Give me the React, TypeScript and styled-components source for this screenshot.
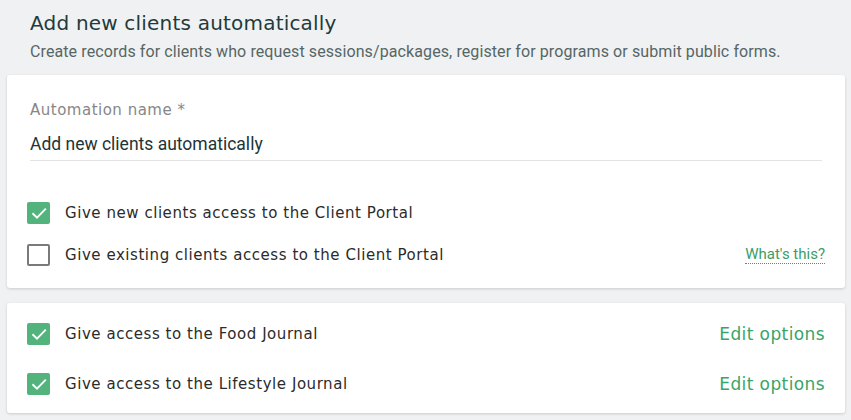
import React from 'react';
import styled, { createGlobalStyle } from 'styled-components';

const GlobalStyle = createGlobalStyle`
  body {
    margin: 0;
    background: #f0f1f3;
    font-family: Roboto, "Liberation Sans", sans-serif;
  }
`;

const Page = styled.div`
  padding: 8px 7px 0 7px;
  width: 838px;
`;

const Header = styled.div`
  padding: 0 0 13px 23px;
`;

const Title = styled.h1`
  margin: 0;
  font-family: "DejaVu Sans", sans-serif;
  font-weight: 400;
  font-size: 20px;
  letter-spacing: 0.2px;
  line-height: 30px;
  color: #1f3b3a;
`;

const Subtitle = styled.p`
  margin: 4px 0 0;
  font-size: 16px;
  letter-spacing: 0.1px;
  line-height: 20px;
  color: #566665;
`;

const Card = styled.section<{ $pad: string }>`
  background: #fff;
  border-radius: 3px;
  box-shadow: 0 1px 3px rgba(0, 0, 0, 0.16);
  padding: ${(p) => p.$pad};
  margin-bottom: 15px;
`;

const Field = styled.div`
  margin: 0 0 31px 3px;
  width: 792px;
  border-bottom: 1px solid #e1e3e3;
`;

const FieldLabel = styled.div`
  font-family: "DejaVu Sans", sans-serif;
  font-size: 15px;
  letter-spacing: 0.5px;
  line-height: 20px;
  color: #878787;
`;

const FieldValue = styled.div`
  margin-top: 14px;
  padding-bottom: 6px;
  font-size: 17.5px;
  line-height: 20px;
  color: #1d3535;
`;

const Row = styled.div<{ $h: number }>`
  display: flex;
  align-items: center;
  height: ${(p) => p.$h}px;
`;

const Box = styled.span<{ $on: boolean }>`
  box-sizing: border-box;
  width: 23px;
  height: 22px;
  border-radius: 2px;
  flex: none;
  display: flex;
  align-items: center;
  justify-content: center;
  background: ${(p) => (p.$on ? '#52b37c' : '#fff')};
  border: ${(p) => (p.$on ? 'none' : '2px solid #7a7a7a')};
`;

const Label = styled.span`
  margin-left: 15px;
  flex: 1;
  font-family: "DejaVu Sans", sans-serif;
  font-size: 15px;
  letter-spacing: 0.55px;
  color: #2b2b2b;
`;

const Help = styled.a`
  font-size: 15px;
  color: #3a9e67;
  text-decoration: none;
  border-bottom: 1px dotted #3a9e67;
  line-height: 17px;
`;

const EditLink = styled.a`
  font-family: "DejaVu Sans", sans-serif;
  font-size: 17px;
  letter-spacing: 0.4px;
  color: #3aa468;
  text-decoration: none;
`;

const Check: React.FC<{ on: boolean }> = ({ on }) => (
  <Box $on={on}>
    {on && (
      <svg width="22" height="22" viewBox="0 0 22 22">
        <path d="M4.5 11.2 L9 15.6 L17.8 6.6" fill="none" stroke="#fff" strokeWidth="1.9" />
      </svg>
    )}
  </Box>
);

export default function App() {
  return (
    <>
      <GlobalStyle />
      <Page>
        <Header>
          <Title>Add new clients automatically</Title>
          <Subtitle>
            Create records for clients who request sessions/packages, register for programs or submit public forms.
          </Subtitle>
        </Header>
        <Card $pad="25px 20px 12px 20px">
          <Field>
            <FieldLabel>Automation name *</FieldLabel>
            <FieldValue>Add new clients automatically</FieldValue>
          </Field>
          <Row $h={42}>
            <Check on />
            <Label>Give new clients access to the Client Portal</Label>
          </Row>
          <Row $h={42}>
            <Check on={false} />
            <Label>Give existing clients access to the Client Portal</Label>
            <Help href="#">What's this?</Help>
          </Row>
        </Card>
        <Card $pad="6px 20px 4px 20px">
          <Row $h={50}>
            <Check on />
            <Label>Give access to the Food Journal</Label>
            <EditLink href="#">Edit options</EditLink>
          </Row>
          <Row $h={50}>
            <Check on />
            <Label>Give access to the Lifestyle Journal</Label>
            <EditLink href="#">Edit options</EditLink>
          </Row>
        </Card>
      </Page>
    </>
  );
}
